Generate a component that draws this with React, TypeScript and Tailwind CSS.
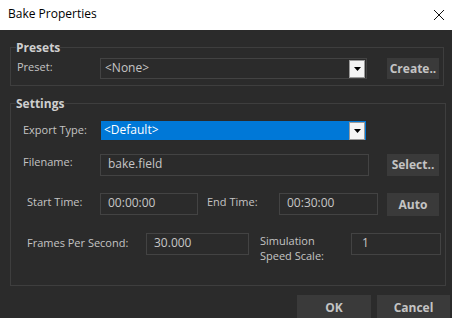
import React from "react";

const font = { fontFamily: '"Open Sans", "Noto Sans", sans-serif' };

const Arrow = () => (
	<div className="flex h-[18px] w-[16px] items-center justify-center border border-[#9a9a9a] bg-[#f4f4f4]">
		<svg width="7" height="4" viewBox="0 0 7 4">
			<path d="M0 0h7L3.5 4z" fill="#000" />
		</svg>
	</div>
);

const Btn = ({ label, w, h = "h-[22px]" }: { label: string; w: string; h?: string }) => (
	<button className={`${w} ${h} flex items-center justify-center bg-[#3a3a3a] text-[12px] font-bold text-[#c4c4c4]`}>
		{label}
	</button>
);

const Field = ({ value, w, pl = "pl-[7px]" }: { value: string; w: string; pl?: string }) => (
	<div className={`${w} ${pl} flex h-[22px] items-center border border-[#434343] pb-[2px] text-[12px] text-[#c6c6c6]`}>
		{value}
	</div>
);

export default function App() {
	return (
		<div className="h-[318px] w-[452px] overflow-hidden bg-[#2b2b2b]" style={font}>
			{/* title bar */}
			<div className="flex h-[30px] items-center justify-between bg-white pl-[8px] pr-[6px] text-[12px] text-black">
				<span className="pb-[2px]">Bake Properties</span>
				<svg width="12" height="12" viewBox="0 0 12 12" className="mr-[1px]">
					<path d="M1 1l10 10M11 1L1 11" stroke="#111" strokeWidth="1" />
				</svg>
			</div>

			{/* presets */}
			<fieldset className="mx-[10px] mt-[10px] border border-[#3e3e3e] pb-[6px] pl-[6px] pr-[4px]">
				<legend className="ml-[-1px] text-[12px] leading-[15px] font-bold text-[#cfcfcf]">Presets</legend>
				<div className="mt-[3px] flex items-start">
					<span className="w-[83px] pt-[1px] text-[11px] text-[#c4c4c4]">Preset:</span>
					<div className="flex h-[21px] w-[267px] items-center justify-between border border-[#434343] pl-[4px] pr-[1px] text-[12px] text-[#c6c6c6]">
						<span className="pb-[2px]">&lt;None&gt;</span>
						<Arrow />
					</div>
					<div className="ml-[20px]">
						<Btn label="Create.." w="w-[52px]" h="h-[21px]" />
					</div>
				</div>
			</fieldset>

			{/* settings */}
			<fieldset className="mx-[10px] mt-[10px] border border-[#3e3e3e] pb-[22px] pl-[12px] pr-[4px]">
				<legend className="ml-[-7px] text-[12px] leading-[15px] font-bold text-[#cfcfcf]">Settings</legend>
				<div className="mt-[9px] flex items-start">
					<span className="w-[77px] pt-[2px] text-[11px] text-[#c4c4c4]">Export Type:</span>
					<div className="flex h-[21px] w-[267px] items-center justify-between border border-[#2a2a2a] bg-[#0078d7] pl-[3px] pr-[1px] text-[12px] text-white">
						<span className="pb-[2px]">&lt;Default&gt;</span>
						<Arrow />
					</div>
				</div>
				<div className="mt-[13px] flex items-start">
					<span className="w-[77px] pt-[0px] text-[11px] text-[#c4c4c4]">Filename:</span>
					<Field value="bake.field" w="w-[269px]" />
					<div className="ml-[18px]">
						<Btn label="Select.." w="w-[52px]" />
					</div>
				</div>
				<div className="mt-[17px] flex items-start">
					<span className="w-[77px] pl-[4px] pt-[1px] text-[11px] text-[#c4c4c4]">Start Time:</span>
					<Field value="00:00:00" w="w-[98px]" />
					<span className="w-[81px] pl-[9px] pt-[1px] text-[11px] text-[#c4c4c4]">End Time:</span>
					<Field value="00:30:00" w="w-[99px]" />
					<div className="ml-[9px]">
						<Btn label="Auto" w="w-[52px]" h="h-[23px]" />
					</div>
				</div>
				<div className="mt-[17px] flex items-start">
					<span className="w-[123px] pl-[4px] pt-[2px] text-[11px] text-[#c4c4c4]">Frames Per Second:</span>
					<Field value="30.000" w="w-[103px]" />
					<span className="w-[102px] pl-[11px] text-[11px] leading-[15px] text-[#c4c4c4]">
						Simulation
						<br />
						Speed Scale:
					</span>
					<Field value="1" w="w-[90px]" pl="pl-[10px]" />
				</div>
			</fieldset>

			{/* footer */}
			<div className="mt-[9px] flex justify-end gap-[6px] pr-[2px]">
				<Btn label="OK" w="w-[74px]" h="h-[26px]" />
				<Btn label="Cancel" w="w-[73px]" h="h-[26px]" />
			</div>
		</div>
	);
}
